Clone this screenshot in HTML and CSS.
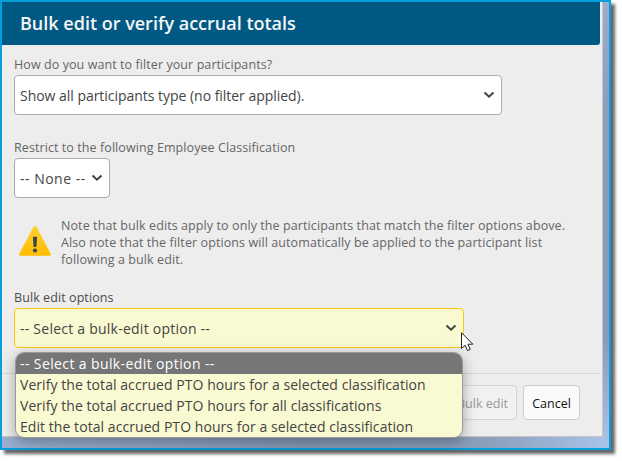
FILE: index.html
```html
<!DOCTYPE html>
<html lang="en">
<head>
<meta charset="utf-8">
<title>Bulk edit or verify accrual totals</title>
<link rel="stylesheet" href="styles.css">
</head>
<body>
<div class="frame">
  <section class="dialog">
    <header class="title">Bulk edit or verify accrual totals</header>
    <main class="content">
      <div class="label filter-label">How do you want to filter your participants?</div>
      <div class="select filter-select"><span>Show all participants type (no filter applied).</span><svg class="chevron" viewBox="0 0 12 8"><path d="M1.5 1.5 6 5.7 10.5 1.5"/></svg></div>
      <div class="label class-label">Restrict to the following Employee Classification</div>
      <div class="select class-select"><span>-- None --</span><svg class="chevron" viewBox="0 0 12 8"><path d="M1.5 1.5 6 5.7 10.5 1.5"/></svg></div>
      <div class="note">
        <svg class="warning" viewBox="0 0 34 30"><defs><linearGradient id="amber" x1="0" y1="0" x2="0" y2="1"><stop offset="0" stop-color="#ffd02c"/><stop offset="1" stop-color="#ffbd00"/></linearGradient></defs><path d="M15.6.8Q17-.6 18.4.8L32.8 28Q33.2 29.7 31.6 29.7H2.3Q.7 29.7 1.1 28Z" fill="url(#amber)"/><path d="M14.9 10.7h4.2l-.7 10.2h-2.8z" fill="#3c4654"/><circle cx="17" cy="24.5" r="2.1" fill="#3c4654"/></svg>
        <div class="note-text"><div class="n1">Note that bulk edits apply to only the participants that match the filter options above.</div><div class="n2">Also note that the filter options will automatically be applied to the participant list</div><div class="n3">following a bulk edit.</div></div>
      </div>
      <div class="label bulk-label">Bulk edit options</div>
      <div class="select bulk-select"><span>-- Select a bulk-edit option --</span><svg class="chevron" viewBox="0 0 12 8"><path d="M1.5 1.5 6 5.7 10.5 1.5"/></svg></div>
    </main>
    <footer class="actions"><div class="button disabled">Bulk edit</div><div class="button cancel">Cancel</div></footer>
  </section>
  <div class="menu">
    <div class="option selected">-- Select a bulk-edit option --</div>
    <div class="option o1">Verify the total accrued PTO hours for a selected classification</div>
    <div class="option o2">Verify the total accrued PTO hours for all classifications</div>
    <div class="option o3">Edit the total accrued PTO hours for a selected classification</div>
  </div>
  <svg class="cursor" viewBox="0 0 13 20"><path d="M.5.7V16.6L4.1 13.2 6.6 18.6 9.3 17.4 6.9 12.2H11.8Z"/></svg>
</div>
</body>
</html>
```
FILE: styles.css
```css
* { box-sizing: border-box; }
body { margin: 0; height: 461px; background: #fff; overflow: hidden; font-family: "Open Sans", "Noto Sans", sans-serif; color: #444; }
.frame { position: relative; width: 611px; height: 450px; border: 2px solid #079edc; background: linear-gradient(180deg, #98adcf, #8a9eb8 25%, #889cb7 75%, #a9c3eb) right top / 7px 100% no-repeat, linear-gradient(90deg, #9ab0d2, #8498b5 50%, #8c9fbb 80%, #a9c3eb); box-shadow: 4px 4px 3px rgba(0,0,0,.6); }
.dialog { width: 601px; height: 435px; background: #ededed; border-right: 1px solid #c9c9c9; border-bottom: 1px solid #c4c4c4; display: flex; flex-direction: column; }
.title { width: 598px; height: 43px; padding-left: 18px; background: #005983; border-radius: 0 0 3px 0; color: #f5f5f5; font-size: 18px; font-weight: 600; line-height: 42px; white-space: nowrap; }
.content { height: 328px; padding: 10px 0 0 12px; }
.label { height: 18px; font-size: 12.5px; line-height: 20px; letter-spacing: .08px; white-space: nowrap; color: #666; }
.select { display: flex; align-items: center; justify-content: space-between; height: 40px; padding: 0 6px 0 5px; border: 1px solid #aaaab1; border-radius: 4px; background: #fff; font-size: 14px; white-space: nowrap; }
.filter-select { width: 488px; margin: 2px 0 23px; }
.filter-select span { letter-spacing: -.03px; }
.class-select { width: 96px; margin: 2px 0 19px; }
.class-select span { letter-spacing: .5px; }
.bulk-select { width: 450px; margin-top: 2px; background: #f9f9d2; border-color: #fac90e; letter-spacing: .24px; }
.bulk-label { color: #4c4c4c; }
.chevron { width: 12px; height: 8px; flex-shrink: 0; fill: none; stroke: #414141; stroke-width: 2; }
.note { display: flex; height: 51px; margin-bottom: 20px; }
.warning { width: 34px; height: 30px; margin: 9px 9px 0 4px; }
.note-text { font-size: 12.5px; line-height: 17px; letter-spacing: .09px; color: #666; white-space: nowrap; }
.actions { width: 598px; height: 63px; border-top: 1px solid #d7d7d7; padding: 11px 20px 0 0; display: flex; justify-content: flex-end; gap: 6px; }
.button { height: 35px; border: 1px solid #cbcbcb; border-radius: 4px; background: #fafafa; color: #111; font-size: 12.5px; line-height: 35px; text-align: center; white-space: nowrap; }
.disabled { width: 75px; padding-right: 8px; text-align: right; background: #f1f1f1; border-color: #d4d4d4; color: #999; }
.cancel { width: 57px; }
.menu { position: absolute; left: 13px; top: 350px; width: 448px; height: 86px; border: 1px solid #999; border-radius: 9px; overflow: hidden; background: #f9f9d2; box-shadow: 0 4px 14px rgba(0,0,0,.32); }
.option { height: 21px; padding-left: 4px; font-size: 14px; line-height: 21px; letter-spacing: .06px; white-space: nowrap; color: #444; }
.selected { background: #767676; color: #fff; letter-spacing: .39px; }
.cursor { position: absolute; left: 459px; top: 330px; width: 13px; height: 20px; fill: #fff; stroke: #20242e; stroke-width: 1; }
```
